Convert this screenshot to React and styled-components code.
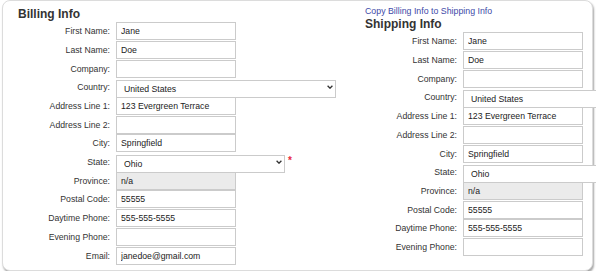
import React from 'react';
import styled, { createGlobalStyle } from 'styled-components';

const GlobalStyle = createGlobalStyle`
  html, body {
    margin: 0;
    padding: 0;
    overflow: hidden;
    background: #fff;
  }
  body {
    font-family: "Liberation Sans", Arial, sans-serif;
    color: #333;
  }
`

const Page = styled.div`
  padding: 0 0 0 2px;
`

const Card = styled.div`
  box-sizing: border-box;
  width: 591px;
  display: flex;
  padding: 6px 0 5px 15px;
  border: 1px solid #dcdcdc;
  border-radius: 8px;
  box-shadow: 1px 2px 2px rgba(0, 0, 0, 0.35);
  background: #fff;
`

const Column = styled.section`
  width: ${p => (p.$width ? `${p.$width}px` : 'auto')};
  flex: ${p => (p.$width ? 'none' : '1')};
  min-width: 0;
`

const Heading = styled.h2`
  margin: 0 0 1.3px;
  font-size: 12px;
  line-height: 14px;
  font-weight: bold;
  color: #333;
`

const CopyLink = styled.a`
  display: block;
  margin-bottom: 0.6px;
  font-size: 8.8px;
  line-height: 9.5px;
  color: #404aa8;
  text-decoration: none;
  cursor: pointer;
`

const Fields = styled.div`
  display: flex;
  flex-direction: column;
`

const Row = styled.label`
  display: grid;
  grid-template-columns: 92px auto auto;
  column-gap: 6px;
  justify-content: start;
  align-items: start;
  height: 18.7px;
`

const LabelText = styled.span`
  text-align: right;
  font-size: 8.7px;
  line-height: 18px;
  color: #333;
  white-space: nowrap;
`

const Input = styled.input`
  box-sizing: border-box;
  width: 120px;
  height: 18px;
  margin: 0;
  padding: 0 4px;
  border: 1px solid #cbcbcb;
  border-radius: 0;
  font-family: "Liberation Sans", Arial, sans-serif;
  font-size: 8.7px;
  color: #222;
  background: ${p => (p.$disabled ? '#ebebeb' : '#fff')};
  outline: none;
`

const SelectWrap = styled.div`
  position: relative;
  width: ${p => p.$width}px;
  height: 18px;
`

const Select = styled.select`
  appearance: none;
  box-sizing: border-box;
  width: 100%;
  height: 100%;
  margin: 0;
  padding: 0 14px 0 7px;
  border: 1px solid #cbcbcb;
  border-radius: 0;
  font-family: "Liberation Sans", Arial, sans-serif;
  font-size: 8.7px;
  color: #222;
  background: #fff;
  outline: none;
`

const Chevron = styled.svg`
  position: absolute;
  right: 3.5px;
  top: 50%;
  margin-top: -2px;
  width: 6px;
  height: 4px;
  pointer-events: none;
`

const Required = styled.span`
  margin: 3px 0 0 -3px;
  font-size: 10px;
  font-weight: bold;
  line-height: 1;
  color: #e8283c;
`

const billing = [
  { label: 'First Name', value: 'Jane' },
  { label: 'Last Name', value: 'Doe' },
  { label: 'Company', value: '' },
  { label: 'Country', select: 'United States', width: 220 },
  { label: 'Address Line 1', value: '123 Evergreen Terrace' },
  { label: 'Address Line 2', value: '' },
  { label: 'City', value: 'Springfield' },
  { label: 'State', select: 'Ohio', width: 169, required: true },
  { label: 'Province', value: 'n/a', disabled: true },
  { label: 'Postal Code', value: '55555' },
  { label: 'Daytime Phone', value: '555-555-5555' },
  { label: 'Evening Phone', value: '' },
  { label: 'Email', value: 'janedoe@gmail.com' },
]

const shipping = [
  { label: 'First Name', value: 'Jane' },
  { label: 'Last Name', value: 'Doe' },
  { label: 'Company', value: '' },
  { label: 'Country', select: 'United States', width: 220 },
  { label: 'Address Line 1', value: '123 Evergreen Terrace' },
  { label: 'Address Line 2', value: '' },
  { label: 'City', value: 'Springfield' },
  { label: 'State', select: 'Ohio', width: 220 },
  { label: 'Province', value: 'n/a', disabled: true },
  { label: 'Postal Code', value: '55555' },
  { label: 'Daytime Phone', value: '555-555-5555' },
  { label: 'Evening Phone', value: '' },
]

const Field = ({ field }) => (
  <Row>
    <LabelText>{field.label}:</LabelText>
    {field.select ? (
      <SelectWrap $width={field.width}>
        <Select defaultValue={field.select}>
          <option>{field.select}</option>
        </Select>
        <Chevron viewBox="0 0 6 4">
          <path d="M0.6 0.7 L3 3.2 L5.4 0.7" fill="none" stroke="#333" strokeWidth="1.3" />
        </Chevron>
      </SelectWrap>
    ) : (
      <Input
        type="text"
        defaultValue={field.value}
        readOnly={field.disabled}
        $disabled={field.disabled}
      />
    )}
    {field.required && <Required>*</Required>}
  </Row>
)

export default function App() {
  return (
    <Page>
      <GlobalStyle />
      <Card>
        <Column $width={347}>
          <Heading>Billing Info</Heading>
          <Fields>
            {billing.map(f => (
              <Field key={f.label} field={f} />
            ))}
          </Fields>
        </Column>
        <Column>
          <CopyLink>Copy Billing Info to Shipping Info</CopyLink>
          <Heading>Shipping Info</Heading>
          <Fields>
            {shipping.map(f => (
              <Field key={f.label} field={f} />
            ))}
          </Fields>
        </Column>
      </Card>
    </Page>
  )
}
